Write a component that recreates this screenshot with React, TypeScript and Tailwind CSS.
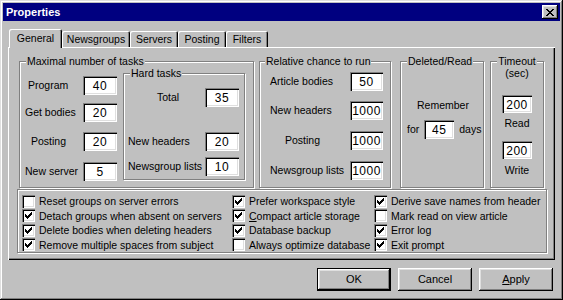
import type { ReactNode } from "react";

const etched = "border border-[#808080] shadow-[inset_1px_1px_0_#fff,1px_1px_0_#fff]";
const raised =
  "bg-[#c0c0c0] shadow-[inset_-1px_-1px_0_#000,inset_1px_1px_0_#fff,inset_-2px_-2px_0_#808080,inset_2px_2px_0_#dfdfdf]";
const sunken =
  "bg-white shadow-[inset_1px_1px_0_#808080,inset_2px_2px_0_#000,inset_-1px_-1px_0_#fff,inset_-2px_-2px_0_#dfdfdf]";

function Legend({ children, className = "" }: { children: ReactNode; className?: string }) {
  return (
    <div
      className={`-mt-[7px] -mb-[5px] h-[12px] leading-[12px] bg-[#c0c0c0] px-[1px] self-start whitespace-nowrap ${className}`}
    >
      {children}
    </div>
  );
}

function Edit({ value, w = "w-[34px]", h = "h-[19px]" }: { value: string; w?: string; h?: string }) {
  return (
    <div
      className={`${w} ${h} ${sunken} shrink-0 flex items-center justify-center text-[12px] tracking-[0.5px] leading-none pt-[1px]`}
    >
      {value}
    </div>
  );
}

// win98 style check mark, 7 columns of 3 pixels
const tick = [2, 3, 4, 3, 2, 1, 0];

function Check({ checked, children }: { checked: boolean; children: ReactNode }) {
  return (
    <div className="flex items-center h-[15px] gap-[4px] whitespace-nowrap">
      <div className={`w-[13px] h-[13px] ${sunken} shrink-0`}>
        {checked && (
          <svg width="13" height="13" viewBox="0 0 13 13" shapeRendering="crispEdges">
            {tick.map((y, i) => (
              <rect key={i} x={3 + i} y={3 + y} width="1" height="3" fill="#000" />
            ))}
          </svg>
        )}
      </div>
      <span className="leading-[12px]">{children}</span>
    </div>
  );
}

const closeX = [
  [0, 1, 6, 7],
  [1, 2, 5, 6],
  [2, 3, 4, 5],
  [3, 4],
  [2, 3, 4, 5],
  [1, 2, 5, 6],
  [0, 1, 6, 7],
];

function Tab({ label, w, active }: { label: string; w: string; active?: boolean }) {
  return (
    <div
      className={`${w} ${
        active ? "h-[19px] -mb-[1px] z-10 pb-[2px]" : "h-[16px]"
      } bg-[#c0c0c0] rounded-t-[2px] shadow-[inset_1px_1px_0_#fff,inset_-1px_0_0_#000,inset_-2px_0_0_#808080] flex items-center justify-center leading-[12px] shrink-0`}
    >
      {label}
    </div>
  );
}

function Button({ children, primary }: { children: ReactNode; primary?: boolean }) {
  return (
    <div
      className={`w-[74px] h-[23px] ${primary ? "border border-black" : ""} flex`}
    >
      <div className={`flex-1 ${raised} flex items-center justify-center text-[11px] leading-none`}>
        {children}
      </div>
    </div>
  );
}

export default function App() {
  return (
    <div className="w-[563px] h-[300px] overflow-hidden bg-[#c0c0c0] text-black text-[10.5px] font-['Liberation_Sans',Arial,sans-serif] p-[3px] flex flex-col shadow-[inset_-1px_-1px_0_#000,inset_1px_1px_0_#dfdfdf,inset_-2px_-2px_0_#808080,inset_2px_2px_0_#fff]">
      {/* title bar */}
      <div className="h-[18px] bg-[#000080] flex items-center justify-between pl-[3px] pr-[2px] shrink-0">
        <span className="text-white font-bold text-[11px] leading-none">Properties</span>
        <div className={`w-[16px] h-[14px] ${raised} flex items-center justify-center`}>
          <svg width="8" height="7" viewBox="0 0 8 7" shapeRendering="crispEdges">
            {closeX.map((row, y) =>
              row.map(x => <rect key={`${y}-${x}`} x={x} y={y} width="1" height="1" fill="#000" />)
            )}
          </svg>
        </div>
      </div>

      <div className="px-[5px] flex flex-col">
        {/* tabs */}
        <div className="mt-[8px] h-[18px] flex items-end pl-[1px] relative">
          <Tab label="General" w="w-[53px]" active />
          <Tab label="Newsgroups" w="w-[68px]" />
          <Tab label="Servers" w="w-[48px]" />
          <Tab label="Posting" w="w-[48px]" />
          <Tab label="Filters" w="w-[42px]" />
        </div>

        {/* tab panel */}
        <div className="h-[213px] flex flex-col shadow-[inset_1px_1px_0_#fff,inset_-1px_-1px_0_#000,inset_-2px_-2px_0_#808080]">
          <div className="flex mt-[14px] ml-[11px] h-[127px]">
            {/* Maximal number of tasks */}
            <div className={`${etched} w-[235px] h-full flex flex-col`}>
              <Legend className="ml-[6px]">Maximal number of tasks</Legend>
              <div className="flex">
                <div className="w-[97px] flex flex-col">
                  <div className="flex items-center mt-[14px]">
                    <span className="w-[63px] pl-[8px]">Program</span>
                    <Edit value="40" />
                  </div>
                  <div className="flex items-center mt-[8px]">
                    <span className="w-[63px] pl-[5px]">Get bodies</span>
                    <Edit value="20" />
                  </div>
                  <div className="flex items-center mt-[10px]">
                    <span className="w-[63px] pl-[11px]">Posting</span>
                    <Edit value="20" />
                  </div>
                  <div className="flex items-center mt-[11px]">
                    <span className="w-[63px] pl-[5px] whitespace-nowrap">New server</span>
                    <Edit value="5" />
                  </div>
                </div>

                {/* Hard tasks */}
                <div className={`${etched} w-[122px] h-[107px] mt-[11px] ml-[6px] flex flex-col`}>
                  <Legend className="ml-[6px]">Hard tasks</Legend>
                  <div className="flex items-center mt-[14px]">
                    <span className="w-[81px] pl-[33px]">Total</span>
                    <Edit value="35" />
                  </div>
                  <div className="flex items-center mt-[25px]">
                    <span className="w-[81px] pl-[4px] whitespace-nowrap">New headers</span>
                    <Edit value="20" />
                  </div>
                  <div className="flex items-center mt-[6px]">
                    <span className="w-[81px] pl-[4px] whitespace-nowrap">Newsgroup lists</span>
                    <Edit value="10" />
                  </div>
                </div>
              </div>
            </div>

            {/* Relative chance to run */}
            <div className={`${etched} w-[132px] h-full ml-[5px] flex flex-col`}>
              <Legend className="ml-[5px]">Relative chance to run</Legend>
              <div className="flex items-center mt-[10px]">
                <span className="w-[90px] pl-[10px]">Article bodies</span>
                <Edit value="50" w="w-[33px]" />
              </div>
              <div className="flex items-center mt-[10px]">
                <span className="w-[90px] pl-[10px]">New headers</span>
                <Edit value="1000" w="w-[33px]" />
              </div>
              <div className="flex items-center mt-[11px]">
                <span className="w-[90px] pl-[25px]">Posting</span>
                <Edit value="1000" w="w-[33px]" />
              </div>
              <div className="flex items-center mt-[11px]">
                <span className="w-[90px] pl-[10px] whitespace-nowrap">Newsgroup lists</span>
                <Edit value="1000" w="w-[33px]" />
              </div>
            </div>

            {/* Deleted/Read */}
            <div className={`${etched} w-[84px] h-full ml-[9px] flex flex-col`}>
              <Legend className="ml-[6px]">Deleted/Read</Legend>
              <span className="mt-[37px] ml-[16px] leading-[12px]">Remember</span>
              <div className="flex items-center mt-[9px] ml-[6px]">
                <span>for</span>
                <div className="ml-[5px]">
                  <Edit value="45" w="w-[30px]" />
                </div>
                <span className="ml-[5px]">days</span>
              </div>
            </div>

            {/* Timeout */}
            <div className={`${etched} w-[54px] h-full ml-[6px] flex flex-col items-center`}>
              <div className="-mt-[7px] -mb-[17px] h-[24px] leading-[12px] bg-[#c0c0c0] px-[1px] text-center">
                Timeout
                <br />
                (sec)
              </div>
              <div className="mt-[33px]">
                <Edit value="200" w="w-[30px]" h="h-[18px]" />
              </div>
              <span className="mt-[4px] leading-[12px]">Read</span>
              <div className="mt-[12px]">
                <Edit value="200" w="w-[30px]" h="h-[18px]" />
              </div>
              <span className="mt-[5px] leading-[12px]">Write</span>
            </div>
          </div>

          {/* options */}
          <div className={`${etched} mt-[1px] ml-[9px] w-[530px] h-[64px] flex pt-[4px]`}>
            <div className="ml-[4px] w-[210px] flex flex-col">
              <Check checked={false}>Reset groups on server errors</Check>
              <Check checked>Detach groups when absent on servers</Check>
              <Check checked>Delete bodies when deleting headers</Check>
              <Check checked>Remove multiple spaces from subject</Check>
            </div>
            <div className="w-[142px] flex flex-col">
              <Check checked>Prefer workspace style</Check>
              <Check checked>
                <span className="underline">C</span>ompact article storage
              </Check>
              <Check checked>Database backup</Check>
              <Check checked={false}>Always optimize database</Check>
            </div>
            <div className="flex flex-col">
              <Check checked>Derive save names from header</Check>
              <Check checked={false}>Mark read on view article</Check>
              <Check checked>Error log</Check>
              <Check checked>Exit prompt</Check>
            </div>
          </div>
        </div>

        {/* buttons */}
        <div className="flex justify-end gap-[7px] mt-[8px] pr-[2px]">
          <Button primary>OK</Button>
          <Button>Cancel</Button>
          <Button>
            <span className="underline">A</span>pply
          </Button>
        </div>
      </div>
    </div>
  );
}
